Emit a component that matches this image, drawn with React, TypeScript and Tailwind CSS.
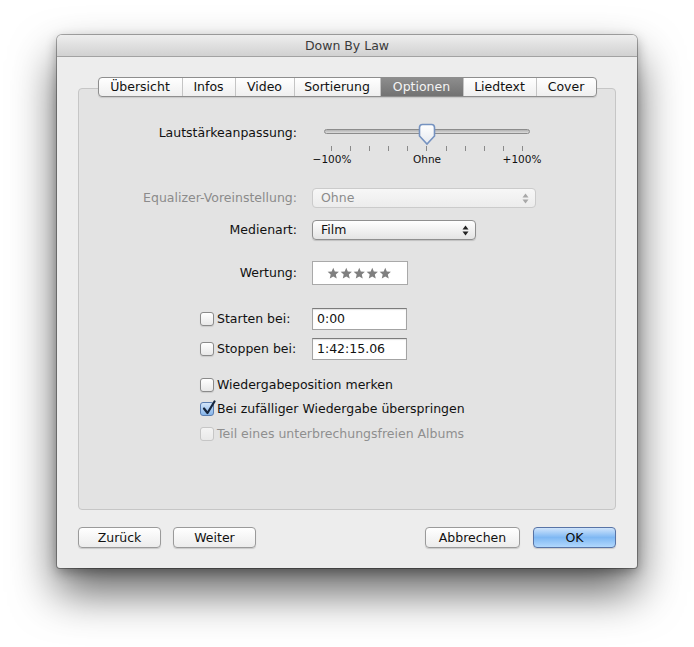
import React from "react"

const tabs = [
  { label: "Übersicht", w: "w-[83px]" },
  { label: "Infos", w: "w-[53px]" },
  { label: "Video", w: "w-[59px]" },
  { label: "Sortierung", w: "w-[86px]" },
  { label: "Optionen", w: "w-[83px]", active: true },
  { label: "Liedtext", w: "w-[73px]" },
  { label: "Cover", w: "w-[60px]" },
]

function Tabs() {
  return (
    <div className="relative z-10 flex h-[20px] rounded-[4px] border border-[#8e8e8e] bg-gradient-to-b from-white to-[#efefef] shadow-[0_1px_1px_rgba(0,0,0,0.12)] overflow-hidden">
      {tabs.map((t, i) => (
        <div
          key={t.label}
          className={
            "flex items-center justify-center pt-px leading-none " +
            t.w +
            (i > 0 ? " border-l border-[#c4c4c4]" : "") +
            (t.active
              ? " bg-gradient-to-b from-[#8d8d8d] to-[#727272] text-[#f4f4f4] border-[#6f6f6f]"
              : " text-[#111]")
          }
        >
          {t.label}
        </div>
      ))}
    </div>
  )
}

function Arrows({ disabled }: { disabled?: boolean }) {
  const c = disabled ? "#a8a8a8" : "#222"
  return (
    <svg width="7" height="11" viewBox="0 0 7 11">
      <path d="M0.5 4.5 L3.5 0.5 L6.5 4.5 Z" fill={c} />
      <path d="M0.5 6.5 L3.5 10.5 L6.5 6.5 Z" fill={c} />
    </svg>
  )
}

function Popup({ value, w, disabled }: { value: string; w: string; disabled?: boolean }) {
  return (
    <div
      className={
        "ml-[15px] flex h-[20px] items-center justify-between rounded-[4px] border pl-[8px] pr-[6px] " +
        w +
        (disabled
          ? " border-[#cbcbcb] bg-gradient-to-b from-[#f7f7f7] to-[#ececec] text-[#8b8b8b]"
          : " border-[#8f8f8f] bg-gradient-to-b from-white to-[#e4e4e4] text-[#111] shadow-[0_1px_1px_rgba(0,0,0,0.15)]")
      }
    >
      <span className="pt-px">{value}</span>
      <Arrows disabled={disabled} />
    </div>
  )
}

function Check({ checked, disabled }: { checked?: boolean; disabled?: boolean }) {
  return (
    <div
      className={
        "relative h-[14px] w-[14px] shrink-0 rounded-[3px] border " +
        (checked
          ? "border-[#5a7db0] bg-gradient-to-b from-[#d3e5f9] to-[#86b5ea]"
          : disabled
            ? "border-[#c6c6c6] bg-gradient-to-b from-[#f4f4f4] to-[#e9e9e9]"
            : "border-[#8a8a8a] bg-gradient-to-b from-white to-[#e8e8e8] shadow-[0_1px_1px_rgba(0,0,0,0.1)]")
      }
    >
      {checked && (
        <svg className="absolute left-[1px] top-[-3px]" width="14" height="15" viewBox="0 0 14 15">
          <path d="M2 8.5 L5.5 13 L12.5 1.5" fill="none" stroke="#17263d" strokeWidth="2.2" strokeLinecap="round" strokeLinejoin="round" />
        </svg>
      )}
    </div>
  )
}

function Star() {
  return (
    <svg width="12.5" height="12.5" viewBox="0 0 24 24">
      <polygon points="12,1.5 15,8.6 22.8,9.3 16.9,14.4 18.7,22 12,18 5.3,22 7.1,14.4 1.2,9.3 9,8.6" fill="#7f7f7f" />
    </svg>
  )
}

function Field({ value }: { value: string }) {
  return (
    <div className="flex h-[22px] w-[95px] items-center border border-[#a3a3a3] border-t-[#7c7c7c] bg-white pl-[4px] pt-px shadow-[inset_0_1px_1px_rgba(0,0,0,0.12)] text-[#111]">
      {value}
    </div>
  )
}

function Slider() {
  return (
    <div className="ml-[27px] flex w-[206px] flex-col">
      <div className="relative h-[24px]">
        <div className="mt-[7px] h-[5px] rounded-full border border-[#8c8c8c] bg-gradient-to-b from-[#b3b3b3] to-[#dcdcdc]" />
        <svg className="absolute left-[94px] top-[1px]" width="18" height="23" viewBox="0 0 18 23">
          <defs>
            <linearGradient id="knob" x1="0" y1="0" x2="0" y2="1">
              <stop offset="0" stopColor="#ffffff" />
              <stop offset="1" stopColor="#e6e9ee" />
            </linearGradient>
          </defs>
          <path d="M1.5 4.5 Q1.5 1.5 4.5 1.5 H13.5 Q16.5 1.5 16.5 4.5 V13 L9 21 L1.5 13 Z" fill="url(#knob)" stroke="#7592c0" strokeWidth="1.6" />
        </svg>
      </div>
      <div className="flex h-[5px] justify-between px-[7px]">
        {Array.from({ length: 11 }).map((_, i) => (
          <div key={i} className="h-[5px] w-px bg-[#8a8a8a]" />
        ))}
      </div>
      <div className="-mx-[12px] mt-[2px] flex justify-between text-[10.5px] leading-[13px] text-[#111]">
        <span className="w-[40px] text-center">−100%</span>
        <span className="w-[40px] text-center">Ohne</span>
        <span className="w-[40px] text-center">+100%</span>
      </div>
    </div>
  )
}

function Button({ label, w, primary }: { label: string; w: string; primary?: boolean }) {
  return (
    <div
      className={
        "flex h-[21px] items-center justify-center rounded-[4px] border pt-px shadow-[0_1px_1px_rgba(0,0,0,0.15)] " +
        w +
        (primary
          ? " border-[#5874a6] bg-gradient-to-b from-[#cfe4fb] via-[#7fb8f3] to-[#b1d8fd] text-[#0c0c0c]"
          : " border-[#9a9a9a] bg-gradient-to-b from-white to-[#ececec] text-[#111]")
      }
    >
      {label}
    </div>
  )
}

export default function App() {
  return (
    <div className="h-[647px] w-[694px] bg-white pl-[57px] pt-[35px] text-[12.5px] [font-family:'DejaVu_Sans',sans-serif]">
      <div className="w-[580px] rounded-t-[5px] rounded-b-[3px] bg-[#ededed] shadow-[0_0_0_1px_rgba(0,0,0,0.3),0_24px_45px_rgba(0,0,0,0.62),0_4px_12px_rgba(0,0,0,0.3)]">
        <div className="flex h-[22px] items-center justify-center rounded-t-[5px] border-b border-[#a2a2a2] bg-gradient-to-b from-[#eeeeee] to-[#d1d1d1] pt-[2px] text-[12.5px] text-[#3a3a3a]">
          Down By Law
        </div>
        <div className="px-[21px] pb-[20px] pt-[20px]">
          <div className="flex flex-col items-center">
            <Tabs />
            <div className="-mt-[9px] h-[422px] w-full rounded-[4px] border border-[#c6c6c6] bg-[#e3e3e3] pt-[33px]">
              <div className="flex h-[42px] items-start">
                <div className="w-[218px] pt-px text-right leading-[20px] text-[#111]">Lautstärkeanpassung:</div>
                <Slider />
              </div>

              <div className="mt-[24px] flex h-[20px] items-center">
                <div className="w-[218px] pt-px text-right text-[#8b8b8b]">Equalizer-Voreinstellung:</div>
                <Popup value="Ohne" w="w-[224px]" disabled />
              </div>

              <div className="mt-[12px] flex h-[20px] items-center">
                <div className="w-[218px] pt-px text-right text-[#111]">Medienart:</div>
                <Popup value="Film" w="w-[164px]" />
              </div>

              <div className="mt-[21px] flex h-[24px] items-center">
                <div className="w-[218px] pt-px text-right text-[#111]">Wertung:</div>
                <div className="ml-[15px] flex h-[24px] w-[96px] items-center justify-center gap-[0.5px] border border-[#a9a9a9] bg-white pr-[2px]">
                  <Star />
                  <Star />
                  <Star />
                  <Star />
                  <Star />
                </div>
              </div>

              <div className="mt-[23px] flex h-[22px] items-center">
                <div className="flex w-[233px] items-center gap-[3px] pl-[121px] text-[#111]">
                  <Check />
                  <span className="pt-px">Starten bei:</span>
                </div>
                <Field value="0:00" />
              </div>

              <div className="mt-[8px] flex h-[22px] items-center">
                <div className="flex w-[233px] items-center gap-[3px] pl-[121px] text-[#111]">
                  <Check />
                  <span className="pt-px">Stoppen bei:</span>
                </div>
                <Field value="1:42:15.06" />
              </div>

              <div className="mt-[16px] flex h-[18px] items-center gap-[3px] pl-[121px] text-[#111]">
                <Check />
                <span className="pt-px">Wiedergabeposition merken</span>
              </div>
              <div className="mt-[6px] flex h-[18px] items-center gap-[3px] pl-[121px] text-[#111]">
                <Check checked />
                <span className="pt-px">Bei zufälliger Wiedergabe überspringen</span>
              </div>
              <div className="mt-[7px] flex h-[18px] items-center gap-[3px] pl-[121px] text-[#8f8f8f]">
                <Check disabled />
                <span className="pt-px">Teil eines unterbrechungsfreien Albums</span>
              </div>
            </div>
          </div>

          <div className="mt-[17px] flex items-center">
            <Button label="Zurück" w="w-[83px]" />
            <div className="ml-[12px]">
              <Button label="Weiter" w="w-[83px]" />
            </div>
            <div className="flex-1" />
            <Button label="Abbrechen" w="w-[95px]" />
            <div className="ml-[13px]">
              <Button label="OK" w="w-[83px]" primary />
            </div>
          </div>
        </div>
      </div>
    </div>
  )
}
